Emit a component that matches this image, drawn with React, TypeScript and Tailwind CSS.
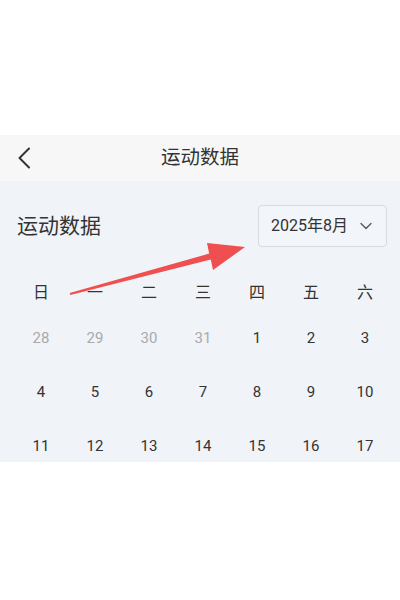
const weekdays = ['日', '一', '二', '三', '四', '五', '六'];

// first week carries the tail of the previous month; only three weeks fit the panel
const days: { n: number; muted?: boolean }[] = [
    { n: 28, muted: true },
    { n: 29, muted: true },
    { n: 30, muted: true },
    { n: 31, muted: true },
    ...Array.from({ length: 17 }, (_, i) => ({ n: i + 1 })),
];

export default function App() {
    return (
        <main className="relative w-[400px] h-[600px] bg-white overflow-hidden font-['Roboto','Noto_Sans_CJK_SC',sans-serif] text-[#333]">
            <div className="h-[135px]" />

            {/* Nav bar */}
            <header className="relative h-[46px] bg-[#f7f7f7] flex items-center justify-center">
                <svg className="absolute left-[17px] top-[12px]" width="14" height="22" viewBox="0 0 14 22" fill="none">
                    <polyline points="12,1.5 2.5,11 12,20.5" stroke="#333" strokeWidth="2" strokeLinecap="round" strokeLinejoin="round" />
                </svg>
                <h1 className="text-[19.5px] leading-none">运动数据</h1>
            </header>

            {/* Calendar panel */}
            <section className="h-[281px] bg-[#f0f3f8] overflow-hidden">
                <div className="flex items-center justify-between pl-[17px] pr-[13px] pt-[24px]">
                    <h2 className="text-[21px] leading-none">运动数据</h2>
                    <button className="w-[129px] h-[42px] flex items-center justify-between pl-[12px] pr-[14px] border border-[#d7dade] rounded-[4px] bg-[#f2f5f9]">
                        <span className="text-[16px] leading-none">2025年8月</span>
                        <svg width="12" height="8" viewBox="0 0 12 8" fill="none">
                            <polyline points="1,1.5 6,6.5 11,1.5" stroke="#555" strokeWidth="1.3" strokeLinecap="round" strokeLinejoin="round" />
                        </svg>
                    </button>
                </div>

                <div className="w-[378px] mx-[14px] mt-[28px] grid grid-cols-7">
                    {weekdays.map((w) => (
                        <div key={w} className="h-[36px] flex items-center justify-center text-[16px]">
                            {w}
                        </div>
                    ))}
                    {days.map((d, i) => (
                        <div
                            key={i}
                            className={`h-[54px] flex items-center justify-center text-[15px] ${d.muted ? 'text-[#aaa]' : 'text-[#333]'}`}
                        >
                            {d.n}
                        </div>
                    ))}
                </div>
            </section>

            {/* Annotation arrow */}
            <svg className="absolute inset-0 pointer-events-none" width="400" height="600" viewBox="0 0 400 600">
                <polygon
                    points="69.7,293 209.2,253.6 207,243 245,247 213,270 210.8,259.4 70.3,295"
                    fill="#f04f4f"
                />
            </svg>
        </main>
    );
}
